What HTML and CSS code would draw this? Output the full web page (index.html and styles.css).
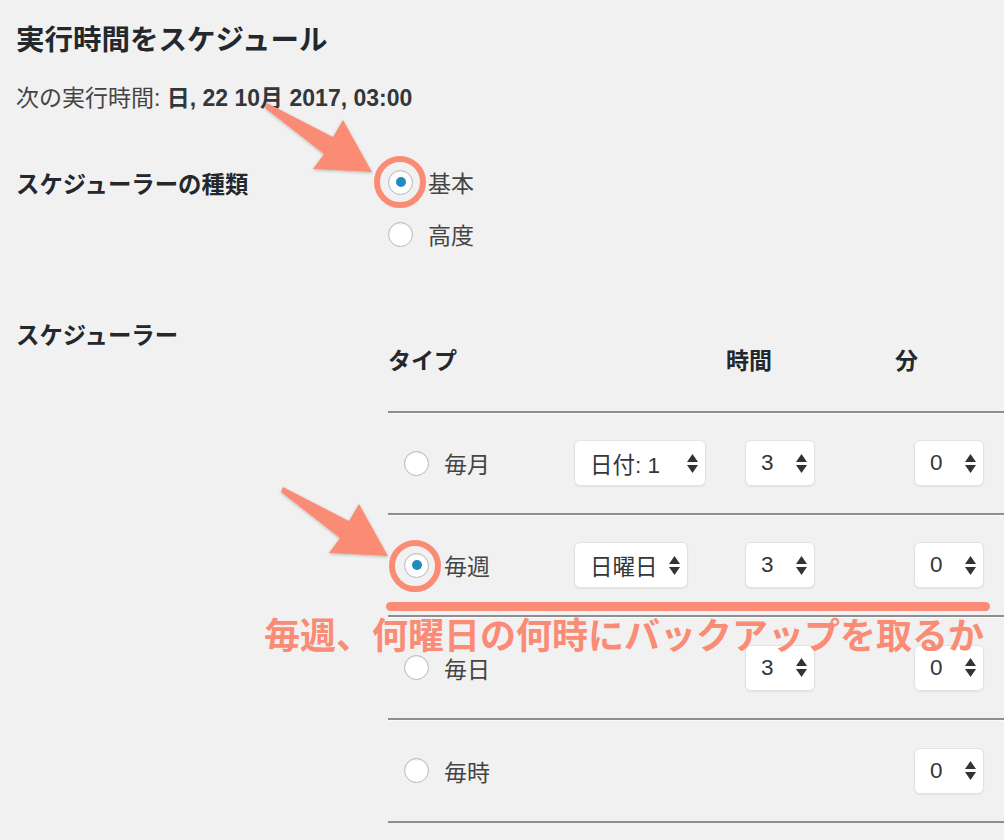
FILE: index.html
```html
<!DOCTYPE html>
<html lang="ja">
<head>
    <meta charset="UTF-8">
    <meta name="viewport" content="width=device-width, initial-scale=1.0">
    <title>実行時間をスケジュール</title>
    <link rel="stylesheet" href="styles.css">
</head>
<body>
    <div class="wrap">
        <h2 class="title">実行時間をスケジュール</h2>
        <p class="next-run">次の実行時間: <strong>日, 22 10月 2017, 03:00</strong></p>

        <div class="form-row type-row">
            <div class="form-label">スケジューラーの種類</div>
            <div class="form-field">
                <label class="option"><span class="radio checked"></span>基本</label>
                <label class="option"><span class="radio"></span>高度</label>
            </div>
        </div>

        <div class="form-row sched-row">
            <div class="form-label">スケジューラー</div>
            <div class="form-field">
                <div class="sched-table">
                    <div class="sched-head">
                        <span>タイプ</span>
                        <span>時間</span>
                        <span>分</span>
                    </div>
                    <div class="sched-line">
                        <label class="option"><span class="radio"></span>毎月</label>
                        <div class="select w-day">日付: 1<span class="arrows"><svg width="11" height="19" viewBox="0 0 11 19"><path d="M5.5 0L11 8H0z M0 11h11L5.5 19z"/></svg></span></div>
                        <div class="select w-num">3<span class="arrows"><svg width="11" height="19" viewBox="0 0 11 19"><path d="M5.5 0L11 8H0z M0 11h11L5.5 19z"/></svg></span></div>
                        <div class="select w-num">0<span class="arrows"><svg width="11" height="19" viewBox="0 0 11 19"><path d="M5.5 0L11 8H0z M0 11h11L5.5 19z"/></svg></span></div>
                    </div>
                    <div class="sched-line">
                        <label class="option"><span class="radio checked"></span>毎週</label>
                        <div class="select w-week">日曜日<span class="arrows"><svg width="11" height="19" viewBox="0 0 11 19"><path d="M5.5 0L11 8H0z M0 11h11L5.5 19z"/></svg></span></div>
                        <div class="select w-num">3<span class="arrows"><svg width="11" height="19" viewBox="0 0 11 19"><path d="M5.5 0L11 8H0z M0 11h11L5.5 19z"/></svg></span></div>
                        <div class="select w-num">0<span class="arrows"><svg width="11" height="19" viewBox="0 0 11 19"><path d="M5.5 0L11 8H0z M0 11h11L5.5 19z"/></svg></span></div>
                    </div>
                    <div class="sched-line tall">
                        <label class="option"><span class="radio"></span>毎日</label>
                        <div></div>
                        <div class="select w-num">3<span class="arrows"><svg width="11" height="19" viewBox="0 0 11 19"><path d="M5.5 0L11 8H0z M0 11h11L5.5 19z"/></svg></span></div>
                        <div class="select w-num">0<span class="arrows"><svg width="11" height="19" viewBox="0 0 11 19"><path d="M5.5 0L11 8H0z M0 11h11L5.5 19z"/></svg></span></div>
                    </div>
                    <div class="sched-line tall">
                        <label class="option"><span class="radio"></span>毎時</label>
                        <div></div>
                        <div></div>
                        <div class="select w-num">0<span class="arrows"><svg width="11" height="19" viewBox="0 0 11 19"><path d="M5.5 0L11 8H0z M0 11h11L5.5 19z"/></svg></span></div>
                    </div>
                </div>
            </div>
        </div>
    </div>

    <!-- annotations drawn over the screenshot -->
    <svg class="marks" width="1004" height="840" viewBox="0 0 1004 840">
        <defs>
            <filter id="soft" x="-20%" y="-20%" width="140%" height="140%">
                <feDropShadow dx="0" dy="1" stdDeviation="1.5" flood-color="#000" flood-opacity="0.25"/>
            </filter>
        </defs>
        <g class="mark" filter="url(#soft)">
            <polygon points="267,103 333,137 343,120 372,172 313,169 324,154 265,108"/>
            <polygon points="283,487 349,521 359,504 388,556 329,553 340,538 281,492"/>
        </g>
        <circle class="ring" cx="400" cy="182" r="23"/>
        <circle class="ring" cx="415" cy="566" r="23"/>
        <rect class="mark" x="386" y="602" width="604" height="9" rx="4.5"/>
    </svg>
    <div class="note">毎週、何曜日の何時にバックアップを取るか</div>
</body>
</html>
```

FILE: styles.css
```css
body {
    margin: 0;
    background-color: #f1f1f1;
    font-family: "Liberation Sans", "Noto Sans CJK JP", sans-serif;
    color: #444;
    overflow: hidden;
}
.wrap {
    padding-left: 16px;
}
.title {
    margin: 22px 0 0;
    font-size: 28.5px;
    line-height: 36px;
    font-weight: 700;
    color: #23282d;
}
.next-run {
    margin: 25px 0 0;
    font-size: 23px;
    line-height: 30px;
}
.next-run strong {
    color: #32373c;
}
.form-row {
    display: grid;
    grid-template-columns: 372px 1fr;
}
.form-label {
    font-size: 23.4px;
    line-height: 30px;
    font-weight: 700;
    color: #23282d;
}
.type-row {
    margin-top: 49px;
}
.type-row .form-label {
    padding-top: 8px;
}
.type-row .form-field {
    display: flex;
    flex-direction: column;
    gap: 12px;
}
.option {
    display: flex;
    align-items: center;
    gap: 15px;
    height: 40px;
    font-size: 23px;
    color: #444;
}
.radio {
    width: 25px;
    height: 25px;
    box-sizing: border-box;
    border: 1px solid #b4b9be;
    border-radius: 50%;
    background-color: #fff;
    box-shadow: inset 0 1px 2px rgba(0, 0, 0, 0.07);
    display: flex;
    align-items: center;
    justify-content: center;
}
.radio.checked::before {
    content: "";
    width: 10px;
    height: 10px;
    border-radius: 50%;
    background-color: #1e8cbe;
}
.sched-row {
    margin-top: 67px;
}
.sched-head {
    display: grid;
    grid-template-columns: 338px 169px 1fr;
    padding: 25px 0 35px;
    font-size: 23px;
    line-height: 30px;
    font-weight: 700;
    color: #23282d;
    border-bottom: 2px solid #8e8e8e;
    box-shadow: 0 1px 0 #fafafa;
}
.sched-line {
    display: grid;
    grid-template-columns: 186px 171px 169px 1fr;
    align-items: center;
    height: 100px;
    border-bottom: 2px solid #8e8e8e;
    box-shadow: 0 1px 0 #fafafa;
}
.sched-line.tall {
    height: 101px;
}
.sched-line .option {
    padding-left: 16px;
    gap: 15px;
}
.select {
    display: flex;
    align-items: center;
    box-sizing: border-box;
    height: 46px;
    padding: 0 7px 0 15px;
    background-color: #fff;
    border: 1px solid #e2e2e2;
    border-radius: 6px;
    box-shadow: 0 1px 2px rgba(0, 0, 0, 0.06);
    font-size: 22.5px;
    color: #32373c;
}
.select .arrows {
    margin-left: auto;
    display: flex;
}
.select .arrows svg {
    fill: #333;
}
.w-day {
    width: 132px;
}
.w-week {
    width: 114px;
}
.w-num {
    width: 70px;
}
.marks {
    position: absolute;
    top: 0;
    left: 0;
    pointer-events: none;
}
.mark {
    fill: #fa8b75;
}
.ring {
    fill: none;
    stroke: #fa8b75;
    stroke-width: 6;
}
.note {
    position: absolute;
    top: 615px;
    left: 264px;
    font-size: 36px;
    line-height: 44px;
    font-weight: 700;
    color: #fa8b75;
    white-space: nowrap;
}
```
